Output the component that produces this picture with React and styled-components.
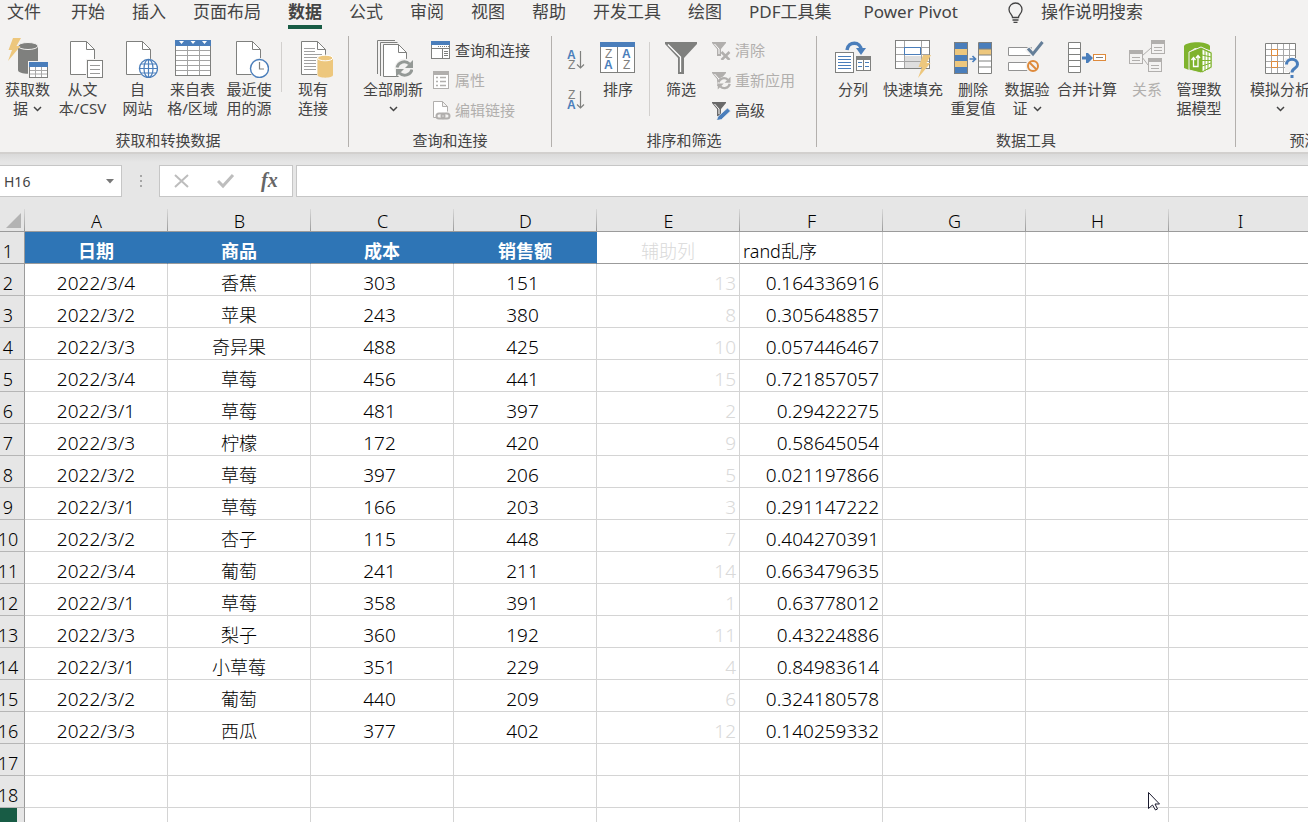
import styled, { createGlobalStyle, css } from "styled-components";

const colors = {
  ribbon: "#f3f2f1",
  frame: "#e6e6e6",
  text: "#444444",
  disabled: "#b1afad",
  blue: "#4a7ebb",
  yellow: "#edc77d",
  orange: "#de8a3b",
  gray: "#7f807e",
  green: "#185c45",
  header: "#2e75b6",
};

const uiFont = `"Noto Sans", "Noto Sans CJK SC", sans-serif`;

const GlobalStyle = createGlobalStyle`
  * {
    box-sizing: border-box;
  }

  body {
    margin: 0;
    overflow: hidden;
    font-family: ${uiFont};
    color: ${colors.text};
  }

  button, input {
    font: inherit;
    color: inherit;
    border: 0;
    padding: 0;
    margin: 0;
    background: none;
  }
`;

const Page = styled.div`
  position: relative;
  display: flex;
  flex-direction: column;
  height: 100vh;
  overflow: hidden;
  background: ${colors.frame};
`;

const Tabs = styled.nav`
  display: flex;
  flex-shrink: 0;
  gap: 27px;
  height: 36px;
  padding-left: 7px;
  overflow: hidden;
  background: ${colors.ribbon};
`;

const Tab = styled.button`
  flex-shrink: 0;
  height: 29px;
  padding-bottom: 1px;
  font-size: 17px;
  line-height: 24px;
  white-space: nowrap;
  border-bottom: 4px solid transparent;
  margin-right: ${({ $space }) => $space || 0}px;

  ${({ $active }) =>
    $active &&
    css`
      font-weight: 700;
      border-color: ${colors.green};
    `}
`;

const TellMe = styled(Tab)`
  display: flex;
  gap: 17px;
  margin-left: 20px;
`;

const Ribbon = styled.div`
  display: flex;
  flex-shrink: 0;
  height: 118px;
  overflow: hidden;
  background: ${colors.ribbon};
  border-bottom: 2px solid #d2d0ce;
`;

const Group = styled.section`
  display: flex;
  flex-direction: column;
  flex: 0 0 ${({ $width }) => $width}px;
  height: 111px;
  border-right: 1px solid #b3b0ad;
`;

const GroupBody = styled.div`
  display: flex;
  flex: 1;
  padding-left: ${({ $left }) => $left || 0}px;
`;

const Caption = styled.h2`
  margin: 0;
  padding-right: ${({ $right }) => $right || 0}px;
  font-size: 15px;
  font-weight: 400;
  line-height: 14px;
  text-align: center;
`;

const BigButton = styled.button`
  display: flex;
  flex-direction: column;
  align-items: center;
  flex: 0 0 ${({ $width }) => $width || 55}px;
  padding-top: 2px;
  font-size: 15px;
  line-height: 19px;
  white-space: nowrap;
  color: ${({ disabled }) => (disabled ? colors.disabled : colors.text)};

  > svg {
    flex-shrink: 0;
    margin-bottom: 2px;
  }
`;

const Line = styled.span`
  display: flex;
  align-items: center;
  gap: 5px;
  height: 19px;
`;

const Divider = styled.span`
  flex: 0 0 1px;
  height: ${({ $height }) => $height}px;
  margin: 6px 0 0 ${({ $left }) => $left}px;
  background: #d2d0ce;
`;

const SmallList = styled.div`
  display: flex;
  flex-direction: column;
`;

const SmallButton = styled.button`
  display: flex;
  align-items: center;
  gap: 4px;
  height: 30px;
  font-size: 15px;
  line-height: 18px;
  padding-bottom: 2px;
  white-space: nowrap;
  color: ${({ disabled }) => (disabled ? colors.disabled : colors.text)};
`;

const SortList = styled.div`
  display: flex;
  flex-direction: column;
  width: 32px;
  padding-top: 4px;
`;

const SortButton = styled.button`
  height: 40px;
  line-height: 0;
`;

const FormulaBar = styled.div`
  display: flex;
  flex-shrink: 0;
  height: 55px;
  padding-top: 11px;
  background: linear-gradient(#dadada, ${colors.frame} 8px);
`;

const NameBox = styled.div`
  display: flex;
  align-items: center;
  width: 122px;
  height: 32px;
  padding: 0 6px 0 4px;
  background: #fff;
  border: 1px solid #c6c6c6;
  border-left: 0;

  input {
    flex: 1;
    min-width: 0;
    font-size: 14px;
  }

  button {
    width: 10px;
    line-height: 0;
  }
`;

const Dots = styled.span`
  display: flex;
  flex-direction: column;
  align-items: center;
  justify-content: center;
  gap: 3px;
  width: 37px;
  height: 32px;

  i {
    width: 2px;
    height: 2px;
    background: #a6a6a6;
  }
`;

const FormulaActions = styled.div`
  display: flex;
  align-items: center;
  justify-content: space-around;
  width: 134px;
  height: 32px;
  background: #fff;
  border: 1px solid #c6c6c6;

  button {
    width: 24px;
    line-height: 0;
  }
`;

const FormulaInput = styled.input`
  && {
    flex: 1;
    height: 32px;
    margin-left: 3px;
    padding: 0 6px;
    font-size: 14px;
    background: #fff;
    border: 1px solid #c6c6c6;
    border-right: 0;
  }
`;

const Sheet = styled.main`
  flex: 1;
  min-height: 0;
  overflow: hidden;
  background: #fff;
`;

const Grid = styled.table`
  width: 100%;
  table-layout: fixed;
  border-collapse: separate;
  border-spacing: 0;
  color: #000;
`;

const RowHeadCol = styled.col`
  width: 25px;
`;

const DataCol = styled.col`
  width: 143px;
`;

const ColumnHead = styled.th`
  height: 23px;
  padding: 2px 0 0;
  font-size: 18px;
  font-weight: 300;
  line-height: 20px;
  background:
    linear-gradient(#d8d8d8, #9b9b9b) right / 1px 100% no-repeat,
    ${colors.frame};
  border-bottom: 1px solid #9b9b9b;
`;

const Corner = styled(ColumnHead)`
  padding: 0 4px 3px 0;
  text-align: right;
  vertical-align: bottom;
  line-height: 0;
`;

const RowHead = styled.th`
  height: 32px;
  padding: 7px 0 0;
  font-family: "Liberation Sans Narrow", ${uiFont};
  font-size: 18px;
  font-weight: 300;
  line-height: 24px;
  background: ${colors.frame};
  border-right: 1px solid #9b9b9b;
  border-bottom: 1px solid ${({ $frozen }) => ($frozen ? "#9b9b9b" : "#b5b5b5")};
`;

const RowNumber = styled.span`
  display: flex;
  justify-content: center;
  width: 16px;
`;

const GreenBlock = styled.span`
  display: block;
  width: 17px;
  height: 32px;
  background: ${colors.green};
`;

const EdgeRowHead = styled(RowHead)`
  padding: 0;
`;

const Cell = styled.td`
  height: 32px;
  padding: 7px ${({ $inset }) => ($inset ? 8 : 3)}px 0 3px;
  font-size: ${({ $number }) => ($number ? 19 : 18)}px;
  font-weight: 300;
  line-height: 24px;
  white-space: nowrap;
  text-align: ${({ $align }) => $align || "left"};
  color: ${({ $faint }) => ($faint ? "#d9d9d9" : "inherit")};
  border-right: 1px solid #d4d4d4;
  border-bottom: 1px solid ${({ $frozen }) => ($frozen ? "#9b9b9b" : "#d4d4d4")};

  ${({ $title }) =>
    $title &&
    css`
      font-weight: 700;
      color: #fff;
      background: ${colors.header};
      border-right-color: ${colors.header};
    `}
`;

const Pointer = styled.svg`
  position: absolute;
  left: 1147px;
  top: 791px;
`;

const Chevron = () => (
  <svg width="9" height="6" viewBox="0 0 9 6" fill="none" stroke="#444" strokeWidth="1.5">
    <path d="M1 1l3.500 3.500L8 1" />
  </svg>
);

const Icon = ({ children, size = 40 }) => (
  <svg width={size} height={size} viewBox={`0 0 ${size} ${size}`} fill="none" aria-hidden="true">
    {children}
  </svg>
);

const Sheetlet = ({ x = 4 }) => (
  <g transform={`translate(${x} 3)`}>
    <path d="M.5 .5h16l8 8v25h-24z" fill="#fff" stroke={colors.gray} />
    <path d="M16.500 .5v8h8" stroke={colors.gray} />
  </g>
);

const Bolt = ({ x = 0, y = 0 }) => (
  <path
    transform={`translate(${x} ${y})`}
    d="M5 0h8L8.500 8H12.500L0 23l4-11H.5z"
    fill={colors.yellow}
  />
);

const GetDataIcon = () => (
  <Icon>
    <path d="M10 8v24c0 5 20 5 20 0V8" fill={colors.gray} />
    <ellipse cx="20" cy="8" rx="10" ry="3.500" fill={colors.gray} stroke={colors.ribbon} />
    <rect x="20" y="23" width="20" height="17" fill={colors.ribbon} />
    <rect x="21.500" y="24.500" width="18" height="15" fill="#fff" stroke={colors.gray} />
    <path d="M21 24h19v5H21z" fill={colors.blue} />
    <path d="M22 32.500h17M22 36h17M27.500 29v10M33.500 29v10" stroke="#a8a8a8" />
    <Bolt />
  </Icon>
);

const TextFileIcon = () => (
  <Icon>
    <Sheetlet x={7} />
    <rect x="23" y="21" width="17" height="19" fill={colors.ribbon} />
    <rect x="24.500" y="22.500" width="15" height="17" fill="#fff" stroke={colors.gray} />
    <path d="M27 27.500h10M27 31.500h10M27 35.500h10" stroke="#9a9a9a" />
  </Icon>
);

const WebIcon = () => (
  <Icon>
    <Sheetlet x={8} />
    <circle cx="30.500" cy="30.500" r="10" fill={colors.ribbon} />
    <circle cx="30.500" cy="30.500" r="9" fill="#fff" stroke={colors.blue} strokeWidth="1.300" />
    <ellipse cx="30.500" cy="30.500" rx="4.500" ry="9" stroke={colors.blue} strokeWidth="1.200" />
    <path d="M30.500 21.500v18M21.500 30.500h18M23 26h15M23 35h15" stroke={colors.blue} strokeWidth="1.200" />
  </Icon>
);

const TableIcon = () => (
  <Icon>
    <rect x="2.500" y="2.500" width="35" height="35" fill="#fff" stroke={colors.gray} />
    <path d="M2 2h36v6H2z" fill={colors.blue} />
    <path d="M6 3h5L8.500 6zM17.500 3h5L20 6zM29 3h5l-2.500 3z" fill="#fff" />
    <path d="M3 12.500h34M3 17.500h34M3 22.500h34M3 27.500h34M3 32.500h34M14.500 8v29M26.500 8v29" stroke="#a3a3a3" />
  </Icon>
);

const RecentIcon = () => (
  <Icon>
    <Sheetlet x={7} />
    <circle cx="31" cy="30.500" r="10.500" fill={colors.ribbon} />
    <circle cx="30.500" cy="30.500" r="9" fill="#fff" stroke={colors.blue} strokeWidth="1.400" />
    <path d="M30.500 24v7h4.500" stroke={colors.gray} strokeWidth="1.200" />
  </Icon>
);

const ConnectionsIcon = () => (
  <Icon>
    <Sheetlet x={8} />
    <path d="M11 10.500h11M11 13.500h11M11 16.500h18M11 19.500h15M11 22.500h12M11 25.500h12M11 28.500h12M11 31.500h12" stroke="#a0a0a0" />
    <path d="M24 18h17v22H24z" fill={colors.ribbon} />
    <path d="M24.500 20v17c0 3.500 15.500 3.500 15.500 0V20z" fill={colors.yellow} />
    <ellipse cx="32.200" cy="20" rx="7.700" ry="2.800" fill={colors.yellow} stroke="#fff" />
  </Icon>
);

const RefreshArrows = ({ color, x, y, scale = 1 }) => (
  <g transform={`translate(${x} ${y}) scale(${scale})`}>
    <g stroke={color} strokeWidth="3">
      <path d="M2 8.500A7.500 7.500 0 0 1 14.500 5" />
      <path d="M17 10.500A7.500 7.500 0 0 1 4.500 14" />
    </g>
    <path d="M18 1v8h-8zM1 18v-8h8z" fill={color} />
  </g>
);

const RefreshAllIcon = () => (
  <Icon>
    <path d="M4.500 36V2.500H22M7.500 38V4.500h17" stroke={colors.gray} />
    <path d="M10.500 6.500h15l8 8v24h-23z" fill="#fff" stroke={colors.gray} />
    <path d="M25.500 6.500v8h8" stroke={colors.gray} />
    <circle cx="31.500" cy="30.500" r="10" fill={colors.ribbon} />
    <RefreshArrows color="#949996" x={22} y={21} />
  </Icon>
);

const QueriesIcon = () => (
  <Icon size={20}>
    <rect x=".5" y="1.500" width="18" height="17" fill="#fff" stroke={colors.gray} />
    <path d="M0 1h19v4H0z" fill={colors.blue} />
    <path d="M1 8.500h17" stroke={colors.gray} />
    <path d="M7 6.500h11" stroke={colors.gray} strokeDasharray="1 1" />
    <path d="M11.500 8v10M13 11.500h4M13 13.500h4M13 15.500h4" stroke={colors.gray} />
  </Icon>
);

const PropertiesIcon = () => (
  <Icon size={20}>
    <rect x="2.500" y="1.500" width="15" height="17" fill="#fff" stroke={colors.disabled} />
    <path d="M2 1h16v4H2z" fill={colors.disabled} />
    <path d="M5 7.500h2M9 7.500h6M5 11.500h2M9 11.500h6M5 15.500h2M9 15.500h6" stroke={colors.disabled} strokeWidth="1.500" />
  </Icon>
);

const EditLinksIcon = () => (
  <Icon size={20}>
    <path d="M2.500 17.500V1.500h9l5 5v5M11.500 1.500v5h5M2.500 17.500H5" fill="#fff" stroke={colors.disabled} />
    <rect x="5.500" y="13.500" width="8" height="5" rx="2.500" stroke={colors.disabled} strokeWidth="2" />
    <rect x="10.500" y="13.500" width="8" height="5" rx="2.500" stroke={colors.disabled} strokeWidth="2" />
  </Icon>
);

const Letter = styled.text`
  font-family: "Liberation Sans", sans-serif;
  font-size: 12px;
  font-weight: ${({ $bold }) => ($bold ? 700 : 400)};
  fill: ${({ $bold }) => ($bold ? colors.blue : colors.gray)};
`;

const SortIcon = ({ top, bottom }) => (
  <Icon size={20}>
    <Letter x={top === "A" ? 0 : 1} y="9" $bold={top === "A"}>
      {top}
    </Letter>
    <Letter x={bottom === "A" ? 0 : 1} y="19" $bold={bottom === "A"}>
      {bottom}
    </Letter>
    <path d="M13.500 1v17M10 14.500l3.500 3.500 3.500-3.500" stroke={colors.gray} strokeWidth="1.200" />
  </Icon>
);

const SortDialogIcon = () => (
  <Icon>
    <rect x="2.500" y="4.500" width="34" height="30" fill="#fff" stroke={colors.gray} />
    <path d="M2 4h35v5H2z" fill={colors.blue} />
    <path d="M19.500 9v25" stroke={colors.gray} />
    <Letter x="7" y="20">Z</Letter>
    <Letter x="6" y="31" $bold>A</Letter>
    <Letter x="24" y="20" $bold>A</Letter>
    <Letter x="25" y="31">Z</Letter>
  </Icon>
);

const FilterIcon = () => (
  <Icon>
    <path d="M4 4h32v2L23 20v16h-6V20L4 6z" fill={colors.gray} />
    <path d="M7 6.500l12.500 12.500v15" stroke="#fff" strokeWidth="1.300" />
  </Icon>
);

const FunnelShape = ({ color }) => (
  <>
    <path d="M0 1h14v1L9 8v7H5V8L0 2z" fill={color} />
    <path d="M2.500 3l4.500 5v5" stroke="#fff" />
  </>
);

const ClearIcon = () => (
  <Icon size={19}>
    <FunnelShape color={colors.disabled} />
    <path d="M9.500 11l8 8M17.500 11l-8 8" stroke={colors.disabled} strokeWidth="2.500" />
  </Icon>
);

const ReapplyIcon = () => (
  <Icon size={19}>
    <FunnelShape color={colors.disabled} />
    <circle cx="12.500" cy="12.500" r="7" fill={colors.ribbon} />
    <RefreshArrows color={colors.disabled} x={5} y={5} scale={0.75} />
  </Icon>
);

const AdvancedIcon = () => (
  <Icon size={19}>
    <FunnelShape color="#6a6a6a" />
    <path d="M15.500 7L18.500 10l-9 8.500-5 1 1.500-4z" fill={colors.blue} stroke={colors.ribbon} strokeWidth=".7" />
  </Icon>
);

const SplitIcon = () => (
  <Icon>
    <path d="M14 12c1-9 14-9 14 0" stroke={colors.blue} strokeWidth="3.500" />
    <path d="M23 10h10l-5 7z" fill={colors.blue} />
    <rect x="2.500" y="14.500" width="18" height="20" fill="#fff" stroke={colors.gray} />
    <path d="M5 18.500h13M5 21.500h13M5 24.500h13M5 27.500h13M5 30.500h13" stroke={colors.blue} />
    <rect x="23.500" y="18.500" width="14" height="14" fill="#fff" stroke={colors.gray} />
    <path d="M23 18h15v4H23z" fill={colors.gray} />
    <path d="M25 24.500h4M32 24.500h4M25 28.500h4M32 28.500h4" stroke={colors.blue} />
    <path d="M30.500 22v10" stroke={colors.gray} />
  </Icon>
);

const FlashFillIcon = () => (
  <Icon>
    <rect x="2.500" y="2.500" width="34" height="28" fill="#fff" stroke={colors.gray} />
    <path d="M11 18h17v12H11z" fill="#dedede" />
    <path d="M3 9.500h33M3 16.500h33M3 23.500h33M11.500 3v27M28.500 3v27" stroke="#a5a5a5" />
    <rect x="11.500" y="9.500" width="16" height="7" fill="#fff" stroke={colors.blue} />
    <Bolt x={25} y={17} />
  </Icon>
);

const DedupeIcon = () => (
  <Icon>
    <path d="M1 4h14v32H1zM26 4h13v7H26z" fill={colors.blue} />
    <path d="M1 11h14v6H1zM1 23h14v6H1zM26 11h13v6H26z" fill={colors.yellow} />
    <path d="M26 17h13v19H26z" fill="#fff" />
    <path d="M1.500 4.500h13v31h-13zM25.500 4.500h13v31h-13zM25.500 11h13M25.500 17h13M25.500 23h13M25.500 29h13" stroke={colors.gray} />
    <path d="M16.500 21h6M19.500 18l3 3-3 3" stroke={colors.blue} strokeWidth="1.700" />
  </Icon>
);

const ValidationIcon = () => (
  <Icon>
    <path d="M1.500 9.500h23v8h-23zM1.500 24.500h23v8h-23z" fill="#fff" stroke="#929292" />
    <path d="M20 10l6 6L35.500 4" stroke={colors.ribbon} strokeWidth="6" />
    <path d="M21 10.500l5 5.500L35.500 4" stroke="#657f99" strokeWidth="3" />
    <circle cx="26" cy="28" r="7.500" fill={colors.ribbon} />
    <circle cx="26" cy="28" r="5" stroke={colors.orange} strokeWidth="2" />
    <path d="M22.500 24.500l7 7" stroke={colors.orange} strokeWidth="2" />
  </Icon>
);

const ConsolidateIcon = () => (
  <Icon>
    <path d="M1.500 4.500h12v30h-12zM1.500 10.500h12M1.500 16.500h12M1.500 22.500h12M1.500 28.500h12" fill="#fff" stroke={colors.gray} />
    <path d="M15 18.500h4V15h2l5 5-5 5h-2v-3.500h-4z" fill={colors.blue} />
    <rect x="26.500" y="16.500" width="12" height="6" fill="#fff" stroke={colors.orange} />
    <path d="M29 19.500h7" stroke={colors.gray} />
  </Icon>
);

const MiniTable = ({ x, y }) => (
  <g transform={`translate(${x} ${y})`}>
    <rect x=".5" y=".5" width="13" height="13" fill={colors.ribbon} stroke={colors.disabled} />
    <path d="M0 0h14v4H0z" fill={colors.disabled} />
    <path d="M3 7.500h8M3 10.500h8" stroke={colors.disabled} />
  </g>
);

const RelationsIcon = () => (
  <Icon>
    <path d="M15 18l9-8M15 19l6 8" stroke={colors.disabled} />
    <MiniTable x={2} y={12} />
    <MiniTable x={24} y={2} />
    <MiniTable x={21} y={20} />
  </Icon>
);

const ModelIcon = () => (
  <Icon>
    <path d="M5 8c3-5 23-5 26 0v4L16 10l-6 4v18l-5-2z" fill="#7fb32d" />
    <path d="M10 14l12-5 11 5v16l-11 5-12-3z" fill="#7fb32d" stroke="#f3f2f1" />
    <path d="M23 11l9 4v14l-9 5z" fill="#fff" stroke="#7fb32d" />
    <path d="M26 12.500v20M29 13.500v18M23 17l9 2M23 22.500h9M23 28l9-3" stroke="#7fb32d" />
    <path d="M14.500 20v8.500h4.500V18M12.500 22l2-2.500 2 2.500M17 20l2-2.500 2 2.500" stroke="#fff" strokeWidth="1.300" />
  </Icon>
);

const WhatIfIcon = () => (
  <Icon>
    <path d="M5.500 5.500h30v30h-30z" fill="#fff" stroke={colors.gray} />
    <path d="M6 11.500h29M6 17.500h29M6 23.500h29M6 29.500h29M11.500 6v29M17.500 6v29M23.500 6v29M29.500 6v29" stroke="#a8a8a8" />
    <path d="M11.500 11.500h6v6h-6zM11.500 23.500h6v6h-6z" fill="#fff" stroke={colors.orange} />
    <path d="M25 20h15v20h-10v-6h-5z" fill={colors.ribbon} />
    <path d="M26.500 26.500c0-7 11-7 11 0 0 4-5.500 3.500-5.500 8" stroke={colors.blue} strokeWidth="3" />
    <path d="M30.500 37h3v3h-3z" fill={colors.blue} />
  </Icon>
);

const BulbIcon = () => (
  <svg width="17" height="24" viewBox="0 0 17 24" fill="none" stroke="#444" strokeWidth="1.300">
    <path d="M5.500 17.500c0-3-3.500-4-3.500-8a6.500 6.500 0 0 1 13 0c0 4-3.500 5-3.500 8zM5.500 20h6M6.500 22.300h4" />
  </svg>
);

const tabs = [
  { name: "文件", space: 3 },
  { name: "开始" },
  { name: "插入" },
  { name: "页面布局" },
  { name: "数据", active: true },
  { name: "公式" },
  { name: "审阅" },
  { name: "视图" },
  { name: "帮助" },
  { name: "开发工具" },
  { name: "绘图" },
  { name: "PDF工具集", space: 5 },
  { name: "Power Pivot", space: 2 },
];

const importTools = [
  { icon: <GetDataIcon />, lines: ["获取数", "据"], menu: true },
  { icon: <TextFileIcon />, lines: ["从文", "本/CSV"] },
  { icon: <WebIcon />, lines: ["自", "网站"] },
  { icon: <TableIcon />, lines: ["来自表", "格/区域"] },
  { icon: <RecentIcon />, lines: ["最近使", "用的源"], width: 58 },
];

const dataTools = [
  { icon: <SplitIcon />, lines: ["分列"], width: 60 },
  { icon: <FlashFillIcon />, lines: ["快速填充"], width: 60 },
  { icon: <DedupeIcon />, lines: ["删除", "重复值"], width: 60 },
  { icon: <ValidationIcon />, lines: ["数据验", "证"], width: 48, menu: true },
  { icon: <ConsolidateIcon />, lines: ["合并计算"], width: 72 },
  { icon: <RelationsIcon />, lines: ["关系"], width: 48, disabled: true },
  { icon: <ModelIcon />, lines: ["管理数", "据模型"], width: 56 },
];

const columns = ["A", "B", "C", "D", "E", "F", "G", "H", "I"];

const rows = [
  ["2022/3/4", "香蕉", 303, 151, 13, "0.164336916"],
  ["2022/3/2", "苹果", 243, 380, 8, "0.305648857"],
  ["2022/3/3", "奇异果", 488, 425, 10, "0.057446467"],
  ["2022/3/4", "草莓", 456, 441, 15, "0.721857057"],
  ["2022/3/1", "草莓", 481, 397, 2, "0.29422275"],
  ["2022/3/3", "柠檬", 172, 420, 9, "0.58645054"],
  ["2022/3/2", "草莓", 397, 206, 5, "0.021197866"],
  ["2022/3/1", "草莓", 166, 203, 3, "0.291147222"],
  ["2022/3/2", "杏子", 115, 448, 7, "0.404270391"],
  ["2022/3/4", "葡萄", 241, 211, 14, "0.663479635"],
  ["2022/3/1", "草莓", 358, 391, 1, "0.63778012"],
  ["2022/3/3", "梨子", 360, 192, 11, "0.43224886"],
  ["2022/3/1", "小草莓", 351, 229, 4, "0.84983614"],
  ["2022/3/2", "葡萄", 440, 209, 6, "0.324180578"],
  ["2022/3/3", "西瓜", 377, 402, 12, "0.140259332"],
  [],
  [],
];

const Tool = ({ icon, lines, width, menu, disabled }) => (
  <BigButton $width={width} disabled={disabled}>
    {icon}
    {lines.map((line, i) => (
      <Line key={line}>
        {line}
        {menu && i === lines.length - 1 && <Chevron />}
      </Line>
    ))}
  </BigButton>
);

const MenuTool = ({ icon, label, width }) => (
  <BigButton $width={width}>
    {icon}
    <Line>{label}</Line>
    <Line>
      <Chevron />
    </Line>
  </BigButton>
);

const RibbonTabs = () => (
  <Tabs>
    {tabs.map((tab) => (
      <Tab key={tab.name} $active={tab.active} $space={tab.space}>
        {tab.name}
      </Tab>
    ))}
    <TellMe>
      <BulbIcon />
      操作说明搜索
    </TellMe>
  </Tabs>
);

const RibbonGroups = () => (
  <Ribbon>
    <Group $width={349}>
      <GroupBody>
        {importTools.map((tool) => (
          <Tool key={tool.lines[0]} {...tool} />
        ))}
        <Divider $left={3} $height={50} />
        <Tool icon={<ConnectionsIcon />} lines={["现有", "连接"]} width={62} />
      </GroupBody>
      <Caption $right={12}>获取和转换数据</Caption>
    </Group>

    <Group $width={203}>
      <GroupBody $left={6}>
        <MenuTool icon={<RefreshAllIcon />} label="全部刷新" width={76} />
        <SmallList>
          <SmallButton>
            <QueriesIcon />
            查询和连接
          </SmallButton>
          <SmallButton disabled>
            <PropertiesIcon />
            属性
          </SmallButton>
          <SmallButton disabled>
            <EditLinksIcon />
            编辑链接
          </SmallButton>
        </SmallList>
      </GroupBody>
      <Caption>查询和连接</Caption>
    </Group>

    <Group $width={265}>
      <GroupBody $left={9}>
        <SortList>
          <SortButton aria-label="升序">
            <SortIcon top="A" bottom="Z" />
          </SortButton>
          <SortButton aria-label="降序">
            <SortIcon top="Z" bottom="A" />
          </SortButton>
        </SortList>
        <Tool icon={<SortDialogIcon />} lines={["排序"]} width={50} />
        <Divider $left={6} $height={74} />
        <Tool icon={<FilterIcon />} lines={["筛选"]} width={62} />
        <SmallList>
          <SmallButton disabled>
            <ClearIcon />
            清除
          </SmallButton>
          <SmallButton disabled>
            <ReapplyIcon />
            重新应用
          </SmallButton>
          <SmallButton>
            <AdvancedIcon />
            高级
          </SmallButton>
        </SmallList>
      </GroupBody>
      <Caption>排序和筛选</Caption>
    </Group>

    <Group $width={419}>
      <GroupBody $left={6}>
        {dataTools.map((tool) => (
          <Tool key={tool.lines[0]} {...tool} />
        ))}
      </GroupBody>
      <Caption>数据工具</Caption>
    </Group>

    <Group $width={138}>
      <GroupBody $left={13}>
        <MenuTool icon={<WhatIfIcon />} label="模拟分析" width={62} />
      </GroupBody>
      <Caption>预测</Caption>
    </Group>
  </Ribbon>
);

const FxLabel = styled.text`
  font-family: "Liberation Serif", serif;
  font-size: 20px;
  font-style: italic;
  font-weight: 700;
  fill: #666;
`;

const Formula = () => (
  <FormulaBar>
    <NameBox>
      <input aria-label="名称框" defaultValue="H16" />
      <button aria-label="展开名称框">
        <svg width="8" height="5" viewBox="0 0 8 5">
          <path d="M0 0h8L4 4.500z" fill="#777" />
        </svg>
      </button>
    </NameBox>
    <Dots>
      <i />
      <i />
      <i />
    </Dots>
    <FormulaActions>
      <button aria-label="取消">
        <svg width="18" height="16" viewBox="0 0 18 16" stroke="#bdbdbd" strokeWidth="2">
          <path d="M2 2l13 12M15 2L2 14" />
        </svg>
      </button>
      <button aria-label="输入">
        <svg width="18" height="16" viewBox="0 0 18 16" stroke="#bdbdbd" strokeWidth="3" fill="none">
          <path d="M1 8l5 5L16 2" />
        </svg>
      </button>
      <button aria-label="插入函数">
        <svg width="20" height="24" viewBox="0 0 20 24">
          <FxLabel x="1" y="18">fx</FxLabel>
        </svg>
      </button>
    </FormulaActions>
    <FormulaInput aria-label="编辑栏" />
  </FormulaBar>
);

const alignments = ["center", "center", "center", "center", "right", "right"];

const Spreadsheet = () => (
  <Sheet>
    <Grid>
      <colgroup>
        <RowHeadCol />
        {columns.map((name) => (
          <DataCol key={name} />
        ))}
        <col />
      </colgroup>
      <thead>
        <tr>
          <Corner>
            <svg width="15" height="15" viewBox="0 0 15 15">
              <path d="M15 0v15H0z" fill="#b3b3b3" />
            </svg>
          </Corner>
          {columns.map((name) => (
            <ColumnHead key={name} scope="col">
              {name}
            </ColumnHead>
          ))}
        </tr>
      </thead>
      <tbody>
        <tr>
          <RowHead scope="row" $frozen>
            <RowNumber>1</RowNumber>
          </RowHead>
          {["日期", "商品", "成本", "销售额"].map((title) => (
            <Cell key={title} $title $frozen $align="center">
              {title}
            </Cell>
          ))}
          <Cell $frozen $faint $align="center">
            辅助列
          </Cell>
          <Cell $frozen>rand乱序</Cell>
          <Cell $frozen />
          <Cell $frozen />
          <Cell $frozen />
        </tr>
        {rows.map((row, r) => (
          <tr key={r}>
            <RowHead scope="row">
              <RowNumber>{r + 2}</RowNumber>
            </RowHead>
            {columns.map((name, c) => (
              <Cell
                key={name}
                $align={alignments[c]}
                $faint={c === 4}
                $number={c !== 1}
                $inset={c === 2 || c === 3}
              >
                {row[c]}
              </Cell>
            ))}
          </tr>
        ))}
        <tr>
          <EdgeRowHead aria-label="19">
            <GreenBlock />
          </EdgeRowHead>
          {columns.map((name) => (
            <Cell key={name} />
          ))}
        </tr>
      </tbody>
    </Grid>
  </Sheet>
);

const App = () => (
  <Page>
    <GlobalStyle />
    <RibbonTabs />
    <RibbonGroups />
    <Formula />
    <Spreadsheet />
    <Pointer width="14" height="21" viewBox="0 0 14 21">
      <path d="M1.500 1.500v16l4-3.500 3 5 2-1-2.500-5h4.500z" fill="#fff" stroke="#1a1a2e" />
    </Pointer>
  </Page>
);

export default App;
